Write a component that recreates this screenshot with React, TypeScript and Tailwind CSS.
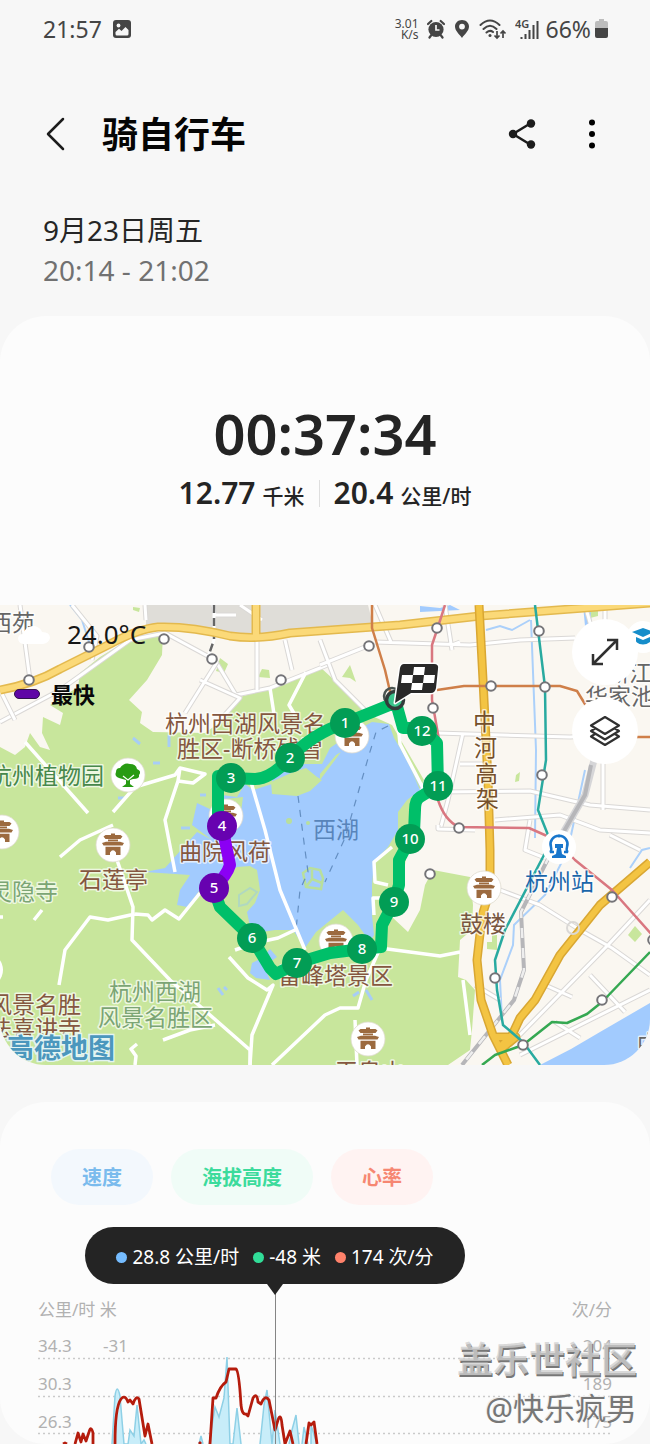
import React from "react";

type Point = [number, number];

function StatusBar() {
  return (
    <div className="flex h-[58px] items-center justify-between pl-[43px] pr-[42px] text-[#454545]">
      <div className="flex items-center gap-[11px]">
        <span className="text-[23px] leading-7">21:57</span>
        <svg className="h-[18px] w-[18px]" viewBox="0 0 18 18" aria-label="图片">
          <rect width="18" height="18" rx="3" fill="#454545" />
          <circle cx="5.5" cy="5.5" r="1.9" fill="#f7f7f7" />
          <path d="M2.5 14V12L6 8.8L8.5 11L12.5 7L15.5 10V14Q15.5 15.5 14 15.5H4Q2.5 15.5 2.5 14Z" fill="#f7f7f7" />
        </svg>
      </div>
      <div className="flex items-center">
        <div className="mr-2 text-right text-[12px] leading-[11px]">
          <div>3.01</div>
          <div>K/s</div>
        </div>
        <svg className="mr-[9px] h-5 w-[18px]" viewBox="0 0 18 20" aria-label="闹钟">
          <circle cx="9" cy="10.5" r="7.6" fill="#454545" />
          <path d="M1 5L4.3 2M17 5L13.7 2M4 16.5L2.5 18.5M14 16.5L15.5 18.5" stroke="#454545" strokeWidth="2.2" strokeLinecap="round" />
          <path d="M9 6V11H12.5" fill="none" stroke="#f7f7f7" strokeWidth="1.7" />
        </svg>
        <svg className="mr-[9px] h-5 w-4" viewBox="0 0 16 20" aria-label="定位">
          <path fillRule="evenodd" d="M8 1C3.9 1 1 3.9 1 7.6C1 12 5.5 15.5 8 19C10.5 15.5 15 12 15 7.6C15 3.9 12.1 1 8 1ZM8 4.7A2.9 2.9 0 1 1 8 10.5A2.9 2.9 0 1 1 8 4.7Z" fill="#454545" />
        </svg>
        <svg className="mr-2 h-[22px] w-7" viewBox="0 0 28 22" aria-label="无线网络">
          <path d="M1.5 7Q11 -2 20.5 7M4.5 11Q11 4.5 17.5 11M7.5 14.5Q11 11.5 14 14" fill="none" stroke="#454545" strokeWidth="2" strokeLinecap="round" />
          <circle cx="11" cy="17.5" r="1.5" fill="#454545" />
          <path d="M18 13V20M15.5 17.5L18 20L20.5 17.5M24 20V13M21.5 15.5L24 13L26.5 15.5" fill="none" stroke="#454545" strokeWidth="1.7" />
        </svg>
        <svg className="mr-[7px] h-[24px] w-[24px]" viewBox="0 0 24 24" aria-label="信号">
          <text x="0" y="11" fontSize="11" fontWeight="600" fill="#454545">4G</text>
          <path d="M6.5 20V22M10.5 17V22M14.5 13V22M18.500 8V22M22.500 4V22" stroke="#454545" strokeWidth="2" />
        </svg>
        <span className="text-[23px] leading-7">66%</span>
        <svg className="ml-1 h-5 w-[13px]" viewBox="0 0 13 20" aria-label="电量">
          <path d="M4 0H9V2H11Q13 2 13 4V10H0V4Q0 2 2 2H4Z" fill="#bdbdbd" />
          <path d="M0 9H13V17Q13 19 11 19H2Q0 19 0 17Z" fill="#454545" />
        </svg>
      </div>
    </div>
  );
}

function Header() {
  return (
    <header className="flex h-[152px] items-center pl-[43px] pr-[45px]">
      <button type="button" aria-label="返回" className="mr-[33px]">
        <svg className="h-9 w-[26px]" viewBox="0 0 26 36">
          <path d="M20 3L5 18L20 33" fill="none" stroke="#1c1c1c" strokeWidth="2.500" strokeLinecap="round" strokeLinejoin="round" />
        </svg>
      </button>
      <h1 className="flex-1 pt-[2px] text-[36px] font-bold leading-[44px] text-[#050505]">骑自行车</h1>
      <button type="button" aria-label="分享" className="mr-[43px]">
        <svg className="h-8 w-7" viewBox="0 0 28 32">
          <path d="M23 5L5 16L23 27" fill="none" stroke="#1c1c1c" strokeWidth="2.500" />
          <circle cx="23" cy="5.500" r="4.200" fill="#1c1c1c" />
          <circle cx="5" cy="16" r="4.200" fill="#1c1c1c" />
          <circle cx="23" cy="26.500" r="4.200" fill="#1c1c1c" />
        </svg>
      </button>
      <button type="button" aria-label="更多选项">
        <svg className="h-8 w-[26px]" viewBox="0 0 26 32">
          <circle cx="13" cy="4.500" r="3" />
          <circle cx="13" cy="16" r="3" />
          <circle cx="13" cy="27.500" r="3" />
        </svg>
      </button>
    </header>
  );
}

function Pagoda({ x, y }: { x: number; y: number }) {
  return (
    <g transform={`translate(${x} ${y})`}>
      <circle r="17" fill="#fff" stroke="#dedace" strokeWidth="0.800" />
      <path
        d="M-2 -11.500H2V-10H7.500L9.500 -8.500L7.500 -6H-7.500L-9.500 -8.500L-7.500 -10H-2ZM-5 -5.500H5V-3.800H-5ZM-7 -3.200H7L11 -2L9.500 0.500H-9.500L-11 -2ZM-7.500 1.800H7.500V10H3V7.500Q0 3 -3 7.500V10H-7.500Z"
        fill="#9c6a3f"
      />
    </g>
  );
}

const minorRoads = [
  "M20 605L30 680M72 605L97 636L92 660M0 722L60 690L130 640L165 633L215 660L236 695L270 688L330 664",
  "M0 690L15 720M145 605L146 620M213 605L215 615H236M240 605L262 620M257 640V690M285 640L292 670M200 680L240 698L220 720M217 662L185 713",
  "M320 665L370 645M320 640L335 680L370 715M375 605L391 642M445 605L452 650M375 642L470 645L520 640L575 638M452 645L460 642",
  "M437 733L570 737L610 735M463 733L448 800L440 830M460 764H490M440 792L530 791L590 805L650 810M603 740V810M495 820L560 815L600 830L650 833M530 820L525 850L545 858M585 605L595 640M605 605V640",
  "M438 825V829L475 830M500 890L540 905L580 930L612 948L650 975M545 985L572 997M650 900L608 945L510 1045M590 975L625 1012M520 1055L650 990M475 985L500 1000M555 1022L580 1038M640 850L610 835",
];

const parkRoads = [
  "M25 742L88 813M113 812L135 787L175 775L180 768L205 774L193 783L178 781L165 820L175 872M180 768L178 781M60 857L80 840L113 825M117 860L133 907L132 940L170 980L250 1050L250 1065M135 914L108 920L90 917L65 950L59 985M135 914L148 915L152 920L165 910L179 919L200 893",
  "M270 688L274 714M306 672L289 705L295 715M251 782L265 830L280 890L305 950M229 957L248 978L267 990L273 985L252 1035L250 1065M235 950L255 943L278 938L295 930",
  "M163 1040L190 1030L215 1025M137 1044L131 1049L136 1056L135 1065M272 1065L325 1015L340 1008H358L366 980L380 948L440 956L460 952M463 980L470 1035M355 1020L357 1065M398 723L400 744L425 792M392 847L374 862L375 882L388 885M385 898H373L374 915M34 920L42 910M0 917H3",
];

const green =
  "M163 633L133 637L100 657L80 673L78 687L50 705L63 713L60 725L43 717L42 733L50 750L40 747L30 733L25 747L15 755L0 747V1065H448L470 1050L472 1030L475 990L466 980L458 977L460 940L472 930L473 905L470 877L433 870L425 885L420 910L408 932L392 917L405 865L414 800L424 780L392 725L370 715L357 703L332 678L320 667L270 688L240 697L223 720L205 733L153 732L140 723L142 712L129 700L147 680L162 655Z";

const lake =
  "M389 724L372 722L350 734L330 748L322 764L305 764L282 766L272 776L272 784L253 790L245 784L237 797L222 795L212 810L197 803L192 825L212 840L197 832L181 850L165 868L145 872L190 875L180 890L177 905L187 907L200 890L220 880L237 867L250 866L257 870L260 890L255 903L247 912L250 926L262 932L275 930L293 930L305 948L316 932L327 923L343 910L358 925L370 942L374 935L372 915L372 885L374 862L388 847L398 830L398 812L407 800L420 790L410 767L400 748L394 738Z";

const stations: Point[] = [
  [29, 680], [89, 647], [164, 639], [212, 659], [281, 680], [369, 646], [437, 628], [539, 631], [491, 686],
  [545, 687], [433, 708], [542, 775], [459, 828], [430, 874], [495, 978], [612, 897], [602, 1000], [523, 1045], [653, 940],
];

const markers: Point[] = [
  [345, 723], [290, 758], [231, 778], [222, 826], [214, 888], [252, 938],
  [297, 963], [362, 949], [394, 902], [410, 839], [438, 786], [422, 731],
];

type Label = { x: number; y: number; text: string; color: string };

const labels: Label[] = [
  { x: -11, y: 631, text: "西苑", color: "#666" },
  { x: 165, y: 732, text: "杭州西湖风景名", color: "#855740" },
  { x: 177, y: 757, text: "胜区-断桥残雪", color: "#855740" },
  { x: -11, y: 784, text: "杭州植物园", color: "#47884b" },
  { x: 179, y: 860, text: "曲院风荷", color: "#855740" },
  { x: 79, y: 888, text: "石莲亭", color: "#855740" },
  { x: -11, y: 900, text: "灵隐寺", color: "#7ba574" },
  { x: 313, y: 838, text: "西湖", color: "#5884ba" },
  { x: 109, y: 1000, text: "杭州西湖", color: "#7ba574" },
  { x: 98, y: 1026, text: "风景名胜区", color: "#7ba574" },
  { x: -11, y: 1013, text: "风景名胜", color: "#855740" },
  { x: -11, y: 1037, text: "法喜讲寺", color: "#855740" },
  { x: 278, y: 984, text: "雷峰塔景区", color: "#855740" },
  { x: 460, y: 932, text: "鼓楼", color: "#785641" },
  { x: 525, y: 890, text: "杭州站", color: "#1a66aa" },
  { x: 335, y: 1080, text: "玉皇山", color: "#855740" },
  { x: 473, y: 730, text: "中", color: "#75502b" },
  { x: 474, y: 756, text: "河", color: "#75502b" },
  { x: 475, y: 782, text: "高", color: "#75502b" },
  { x: 476, y: 807, text: "架", color: "#75502b" },
  { x: 606, y: 681, text: "浙江大学", color: "#666" },
  { x: 585, y: 705, text: "华家池校区", color: "#666" },
  { x: 637, y: 1052, text: "中", color: "#666" },
];

function MapDrawing() {
  return (
    <svg className="block w-full" viewBox="0 605 650 460" aria-label="骑行路线地图">
      <rect y="605" width="650" height="460" fill="#faf7f1" />
      <path d="M146 605H368L373 625L270 640L240 637L165 626L146 628Z" fill="#dfddd8" />
      <path d={green} fill="#c8e69c" />
      <path d="M217 668L220 658L228 664L224 673L216 671ZM342 677L350 665L356 682L350 678ZM487 942H492V935H497V950L487 949ZM628 935L635 926L642 934L635 942ZM589 605H598V616L590 618ZM516 775L520 772L519 781L515 782ZM262 669L269 670L270 678L258 677ZM133 607L140 608L139 612L133 610Z" fill="#c8e69c" />
      <path d={lake} fill="#a2cbfe" />
      <path d="M271 782L291 773L306 768L317 777L322 780L310 791L297 796L272 794ZM217 800L243 797L241 812L225 825L214 813ZM320 780L341 752L336 755L320 774Z" fill="#c8e69c" />
      <path d="M239 895L250 888L257 892L247 904L239 906Z" fill="none" stroke="#b0d8c0" strokeWidth="2" />
      <circle cx="289" cy="821" r="3" fill="#b9df9c" />
      <circle cx="308" cy="823" r="2" fill="#b9df9c" />
      <path d="M303 873L310 868L320 870L323 878L321 889L306 887ZM312 870V879L306 887M312 879L322 883" fill="none" stroke="#b9df9c" strokeWidth="2.500" />
      <path d="M540 1065L571 1049L600 1032L650 1003V1065Z" fill="#a2cbfe" />
      <path d="M420 606L440 608L450 605L460 610L420 612ZM583 605H590L592 626H585ZM252 963L262 958L270 949L277 957L264 966L270 980L256 978L250 973Z" fill="#a2cbfe" />
      <path d="M218 988L223 995M224 987L227 990M353 996L359 992M366 990L372 1000M118 798H125M133 738L140 744M169 735V747M153 763H160M181 828H190M200 795H206" stroke="#a7cdf6" strokeWidth="3" />
      <path d="M70 605L82 620L90 645M486 630L500 626L512 630L530 620M531 620L536 750L535 838M400 745L425 795M568 850L545 895L514 925L513 945L500 980L502 1020M630 868L642 850L650 848M585 770L570 840" fill="none" stroke="#abd0fa" strokeWidth="2" />
      <path d="M298 796L305 850L308 872L300 890L296 930M388 726L376 732L369 755L345 838L325 882" fill="none" stroke="#648fc2" strokeWidth="1.200" strokeDasharray="7 7" />

      {minorRoads.map((d) => (
        <g key={d} fill="none" strokeLinejoin="round">
          <path d={d} stroke="#dad8d6" strokeWidth="5" />
          <path d={d} stroke="#fff" strokeWidth="3" />
        </g>
      ))}
      {parkRoads.map((d) => (
        <path key={d} d={d} fill="none" stroke="#fff" strokeWidth="3.500" strokeLinejoin="round" />
      ))}

      <g fill="none">
        <path d="M214 605V640L208 657" stroke="#fff" strokeWidth="3" />
        <path d="M214 605V640L208 657" stroke="#666" strokeWidth="2.500" strokeDasharray="8 5" />
        <path d="M594 760L585 795L560 838" stroke="#d6d6d8" strokeWidth="7" />
        <path d="M591 765L585 795L560 838M550 855L521 912L524 970L514 1000L462 1065" stroke="#b6b6b9" strokeWidth="4" />
        <path d="M550 855L521 912L524 970L514 1000L462 1065" stroke="#eee" strokeWidth="2.500" strokeDasharray="10 10" />
      </g>
      <g fill="none" strokeLinecap="butt" strokeLinejoin="round">
        <path d="M0 690Q34 684 60 669L110 644Q138 629 158 627Q190 626 230 636Q258 640 290 633L400 625L480 616L650 603M256 605V638" stroke="#e3b94e" strokeWidth="9" />
        <path d="M0 690Q34 684 60 669L110 644Q138 629 158 627Q190 626 230 636Q258 640 290 633L400 625L480 616L650 603M256 605V638" stroke="#fbd978" strokeWidth="6" />
        <path d="M479 605L483 680L488 780L490 850V890L482 916L477 960L481 1000L493 1035L508 1065M500 1047L512 1035L520 1018L535 1000L560 955L600 905L650 862M493 1037L516 1037L500 1050" stroke="#d9a733" strokeWidth="9" />
        <path d="M479 605L483 680L488 780L490 850V890L482 916L477 960L481 1000L493 1035L508 1065M500 1047L512 1035L520 1018L535 1000L560 955L600 905L650 862M493 1037L516 1037L500 1050" stroke="#f3c443" strokeWidth="6" />
        <path d="M372 605V628L385 670L392 700M437 690L464 686H560L577 691L588 709M635 737H650" stroke="#cf7f49" strokeWidth="2.500" />
        <path d="M445 605L437 630L432 645V700L439 740L438 800Q445 821 459 827L529 828L556 840L575 860L612 890L653 936" stroke="#d97780" strokeWidth="2.500" />
        <path d="M535 605L545 687L546 760L538 810L548 835L544 855L505 930L495 960L497 990L503 1025L523 1042L540 1065" stroke="#28aaa0" strokeWidth="2.500" />
        <path d="M650 952L602 1002L587 1014L567 1023L552 1022L523 1045L495 1055L482 1065" stroke="#35a852" strokeWidth="2.500" />
      </g>
      <circle cx="573" cy="928" r="6" fill="none" stroke="#dad8d6" strokeWidth="2" />
      {stations.map(([x, y]) => (
        <circle key={`${x}-${y}`} cx={x} cy={y} r="4.800" fill="#fff" stroke="#747478" strokeWidth="2" />
      ))}

      <Pagoda x={2} y={832} />
      <Pagoda x={113} y={845} />
      <Pagoda x={226} y={816} />
      <Pagoda x={352} y={736} />
      <Pagoda x={336} y={941} />
      <Pagoda x={484} y={888} />
      <Pagoda x={368} y={1039} />
      <circle cx="-14" cy="970" r="17" fill="#fff" />
      <g transform="translate(128 775)">
        <circle r="17" fill="#fff" stroke="#dedace" strokeWidth="0.800" />
        <path d="M-2 5L-9 3Q-14 1 -12 -3Q-12 -7 -8 -7Q-4 -13 2 -11Q8 -11 9 -6Q14 -4 11 0Q12 4 5 4L2 5V9L6 12H-6L-2 9Z" fill="#289b13" />
        <path d="M-5 1L0 5L6 0" fill="none" stroke="#fff" strokeWidth="1.200" />
      </g>
      <g transform="translate(559 847)" fill="none" stroke="#1876cc" strokeWidth="2.500">
        <circle r="17" fill="#fff" stroke="none" />
        <path d="M-5 5H-9Q-7 4 -8 0A8.500 8.500 0 1 1 8 0Q7 4 9 5H5" />
        <path d="M-4 -3H4V1H2L3 7L7 9V11H-7V9L-3 7L-2 1H-4Z" fill="#1876cc" stroke="none" />
        <circle cy="-11" r="1.500" fill="#1876cc" stroke="none" />
      </g>
      <g transform="translate(643 637)">
        <circle r="16" fill="#fff" />
        <path d="M-11 -5L0 -9L11 -5L0 0ZM-7 0V5Q0 10 7 5V0L0 3Z" fill="#158dca" />
      </g>

      <g fontSize="23" strokeLinejoin="round">
        {labels.map((l) => (
          <text
            key={`${l.text}-${l.x}-${l.y}`}
            x={l.x}
            y={l.y}
            fill={l.color}
            stroke="#fff"
            strokeOpacity="0.700"
            strokeWidth={l.text === "西湖" ? 0 : 3}
            paintOrder="stroke"
          >
            {l.text}
          </text>
        ))}
      </g>
      <text x="7" y="1058" fontSize="27" fontWeight="700" fill="#4b97bd" stroke="#e3f4f2" strokeWidth="3" paintOrder="stroke">高德地图</text>

      <g fill="none" strokeWidth="12" strokeLinejoin="round" strokeLinecap="round">
        <path d="M395 699L398 710L403 728H422L437 743L438 786L420 797Q415 800 415 810L414 832L399 860V885L394 902L382 925L381 947L362 949L330 953L297 963L276 974L270 968L252 938L220 907L214 890M222 828L218 815V776L231 778L255 779Q270 779 290 758Q312 734 345 723L392 704" stroke="#00bf69" />
        <path d="M222 826L230 865Q227 875 214 888" stroke="#8b00f4" />
      </g>
      <circle cx="392" cy="696" r="8" fill="none" stroke="#4a5450" strokeWidth="2.500" />
      <circle cx="395" cy="700" r="8.500" fill="#3cc48d" stroke="#333c3a" strokeWidth="3.500" />
      {markers.map(([x, y], i) => (
        <g key={i}>
          <circle cx={x} cy={y} r="15" fill={i === 3 || i === 4 ? "#6702b0" : "#029d55"} />
          <text x={x} y={y + 5} fontSize="15" fontWeight="500" fill="#fff" textAnchor="middle">{i + 1}</text>
        </g>
      ))}
      <path d="M404 664H434Q439 664 438 669L436 688Q435 693 431 693H411L395 703L400 668Q401 664 404 664Z" fill="#292929" stroke="#fff" strokeWidth="3" strokeLinejoin="round" paintOrder="stroke" />
      <path d="M414 667H425L424 675H413ZM402 675H413L412 683H401ZM424 675H435L434 683H423ZM412 683H423L422 690H411Z" fill="#fff" />
    </svg>
  );
}

function RouteMap() {
  return (
    <section className="relative">
      <MapDrawing />
      <div className="absolute left-[14px] top-[14px]">
        <div className="flex items-center">
          <svg className="h-[22px] w-9" viewBox="0 0 36 22" aria-label="多云">
            <path d="M9 21Q4 20 4 15Q5 11 9 11Q12 2 21 3Q27 5 28 9Q36 9 36 15Q35 20 29 21Z" fill="#fff" />
          </svg>
          <span className="ml-[17px] text-[26px] leading-[30px] text-[#161616]">24.0°C</span>
        </div>
        <div className="mt-[30px] flex items-center gap-[11px]">
          <span className="h-[10px] w-[26px] rounded-full border border-[#30134d] bg-[#5f06a6]" />
          <span className="text-[22px] font-bold leading-[30px] text-[#080808]">最快</span>
        </div>
      </div>
      <div className="absolute right-[12px] top-[14px] flex flex-col gap-[13px]">
        <button type="button" aria-label="全屏" className="flex h-[66px] w-[66px] items-center justify-center rounded-full bg-white">
          <svg className="h-7 w-7" viewBox="0 0 28 28">
            <path d="M2 26L26 2M16 2H26V12M2 16V26H12" fill="none" stroke="#303030" strokeWidth="2.500" />
          </svg>
        </button>
        <button type="button" aria-label="图层" className="flex h-[66px] w-[66px] items-center justify-center rounded-full bg-white">
          <svg className="h-8 w-8" viewBox="0 0 32 32">
            <path d="M16 2L30 10.500L16 19L2 10.500ZM6 13.500L2 16L16 24.500L30 16L26 13.500M6 19L2 21.500L16 30L30 21.500L26 19" fill="none" stroke="#303030" strokeWidth="2.200" strokeLinejoin="round" />
          </svg>
        </button>
      </div>
    </section>
  );
}

function Summary() {
  return (
    <section className="flex h-[289px] flex-col items-center pt-[85px] text-[#242424]">
      <div className="text-[56px] font-semibold leading-[64px]">00:37:34</div>
      <div className="mt-[10px] flex items-center">
        <div className="flex items-baseline gap-[7px]">
          <span className="text-[30px] font-semibold leading-9">12.77</span>
          <span className="text-[21px] font-medium">千米</span>
        </div>
        <div className="mx-[14px] h-[27px] w-px bg-[#dedede]" />
        <div className="flex items-baseline gap-[7px]">
          <span className="text-[30px] font-semibold leading-9">20.4</span>
          <span className="text-[21px] font-medium">公里/时</span>
        </div>
      </div>
    </section>
  );
}

const tooltipItems = [
  { dot: "h-[11px] w-[11px] rounded-full bg-[#75bcff]", text: "28.8 公里/时" },
  { dot: "h-[11px] w-[11px] rounded-full bg-[#31dd98]", text: "-48 米" },
  { dot: "h-[11px] w-[11px] rounded-full bg-[#ff826b]", text: "174 次/分" },
];

const rows = [
  { speed: "34.3", altitude: "-31", heart: "204" },
  { speed: "30.3", altitude: "", heart: "189" },
  { speed: "26.3", altitude: "", heart: "175" },
];

function Chart() {
  return (
    <div className="relative h-[160px]">
      <svg className="absolute inset-0 h-full w-full" viewBox="0 1284 650 160" aria-label="速度与心率曲线">
        <path d="M38 1358.500H610M38 1396.500H610M38 1433.500H610" stroke="#cacaca" strokeWidth="1.500" strokeDasharray="2 3" />
        <path d="M112 1444L115 1396Q117 1382 120 1396L124 1444H128L130 1430L134 1436L137 1405L141 1444L144 1440L146 1444M199 1444L201 1436L203 1444M209 1444L215 1407L219 1417L224 1398L227 1357L230 1444H233L237 1408L241 1444M260 1444L264 1405L267 1390L272 1444L275 1410L280 1444M289 1444L292 1430L296 1415L299 1444M302 1444L304 1427L308 1444M311 1444V1425L317 1444" fill="#c8edf9" stroke="#8ed0e6" strokeWidth="1.500" />
        <path d="M63 1444L65 1443L67 1444M75 1444L78 1433L81 1442L83 1434L86 1441L89 1432Q91 1425 93 1433V1444M115 1444Q115 1407 121 1399Q125 1394 128 1402L130 1400L133 1404Q136 1395 139 1399L145 1436L148 1424L152 1444M199 1444L201 1442M210 1444L213 1398H216Q220 1386 226 1382L229 1369H236Q239 1371 241 1405Q242 1415 246 1414L248 1416L253 1398Q257 1392 258 1402L261 1404Q265 1394 269 1400L275 1430L278 1420Q281 1412 282 1425L285 1444L290 1431L293 1444M306 1444L309 1423L311 1425L314 1422L317 1444" fill="none" stroke="#b51c0d" strokeWidth="2.800" strokeLinejoin="round" />
        <path d="M275.500 1290V1444" stroke="#858585" />
        <path d="M267 1284H283L275 1295Z" fill="#242424" />
      </svg>
      <div className="relative px-[38px] pt-[14px] text-[17px] leading-6 text-[#b1b1b1]">
        <div className="flex justify-between">
          <span>公里/时 米</span>
          <span>次/分</span>
        </div>
        <div className="mt-[5px]">
          {rows.map((r) => (
            <div key={r.speed} className="flex h-[38px] items-center">
              <span className="w-[65px]">{r.speed}</span>
              <span className="flex-1">{r.altitude}</span>
              <span>{r.heart}</span>
            </div>
          ))}
        </div>
      </div>
      <div className="absolute bottom-[12px] right-[13px] text-right">
        <div className="text-[36px] font-bold leading-[48px] text-[#d0d0d0]/80 [text-shadow:1px_2px_0_#777777]">盖乐世社区</div>
        <div className="text-[31px] leading-[48px] text-[#777] [text-shadow:-1px_-1px_0_#eee]">@快乐疯男</div>
      </div>
    </div>
  );
}

export default function App() {
  return (
    <main className="bg-[#f7f7f7] font-['Noto_Sans','Noto_Sans_CJK_SC',sans-serif]">
      <StatusBar />
      <Header />
      <div className="h-[106px] pl-[43px] pt-[2px]">
        <div className="text-[28px] leading-9 text-[#252525]">9月23日周五</div>
        <div className="mt-1 text-[28px] leading-9 text-[#717171]">20:14 - 21:02</div>
      </div>
      <div className="overflow-hidden rounded-[46px] bg-[#fcfcfc]">
        <Summary />
        <RouteMap />
      </div>
      <section className="mt-[37px] overflow-hidden rounded-[46px] bg-[#fcfcfc] pt-[47px]">
        <div className="flex gap-[18px] pl-[51px]">
          <button type="button" className="h-14 rounded-full bg-[#f3f8fd] px-[31px] pt-[2px] text-[20px] font-bold text-[#7abbed]">速度</button>
          <button type="button" className="h-14 rounded-full bg-[#f0fcf7] px-[31px] pt-[2px] text-[20px] font-bold text-[#3cdb9c]">海拔高度</button>
          <button type="button" className="h-14 rounded-full bg-[#fff3f2] px-[31px] pt-[2px] text-[20px] font-bold text-[#f68772]">心率</button>
        </div>
        <div className="ml-[85px] mt-[22px] flex h-[57px] w-[380px] items-center justify-center gap-[14px] rounded-full bg-[#242424] pt-[3px] text-[19px] text-white">
          {tooltipItems.map((t) => (
            <span key={t.text} className="flex items-center gap-[5px]">
              <span className={t.dot} />
              {t.text}
            </span>
          ))}
        </div>
        <Chart />
      </section>
    </main>
  );
}
